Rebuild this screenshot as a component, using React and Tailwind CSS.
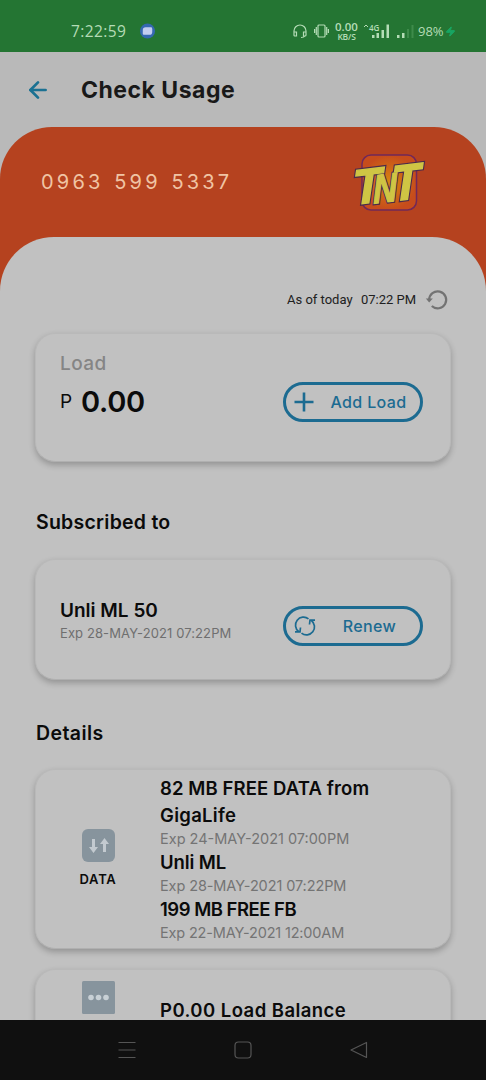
import { ArrowLeft, Zap } from "lucide-react";

const dataItems = [
    { name: "82 MB FREE DATA from", tracking: "tracking-[0.1px]" },
    { name: "GigaLife", exp: "Exp 24-MAY-2021 07:00PM", tracking: "tracking-[0.3px]" },
    { name: "Unli ML", exp: "Exp 28-MAY-2021 07:22PM", tracking: "tracking-[-0.1px]", expTracking: "tracking-[-0.1px]" },
    { name: "199 MB FREE FB", exp: "Exp 22-MAY-2021 12:00AM", tracking: "tracking-[-0.5px]", expTracking: "tracking-[-0.17px]" },
];

export default function App() {
    return (
        <div className="flex flex-col w-[486px] h-[1080px] overflow-hidden bg-[#b9b9b9] font-['Inter',sans-serif] text-[#0b0b0b] whitespace-nowrap">
            <StatusBar />
            <Header />
            <main className="flex-1 min-h-0 overflow-hidden rounded-t-[52px] bg-[#b5421f]">
                <Account />
                <div className="rounded-t-[54px] bg-[#c1c1c1] px-[35px] pt-12 h-[900px]">
                    <LastUpdated />
                    <LoadCard />
                    <h2 className="mt-[45px] h-[30px] leading-[30px] pl-px text-[19.500px] font-semibold tracking-[0.25px]">Subscribed to</h2>
                    <SubscriptionCard />
                    <h2 className="mt-[38px] h-[30px] leading-[30px] pl-px text-[19.500px] font-semibold tracking-[0.4px]">Details</h2>
                    <DetailsCards />
                </div>
            </main>
            <NavBar />
        </div>
    )
}

function StatusBar() {
    return (
        <div className="h-[52px] shrink-0 flex items-center pt-[10px] pl-[71px] bg-[#247533] text-[#b4dcb6] font-['Open_Sans',sans-serif]">
            <p className="w-[68px] text-[15.500px] leading-5 tracking-[0.4px]">7:22:59</p>
            <svg className="w-[17px] h-[18px]" viewBox="0 0 18 18">
                <circle cx="9" cy="9" r="8" fill="#3568b0" />
                <path d="M4 8q0-3 3-3h6q1 0 1 2v3q0 3-3 3H5q-1 0-1-1z" fill="#c2cdf0" />
            </svg>
            <svg className="ml-[137px] w-[14px] h-4" viewBox="0 0 14 16" fill="none" stroke="#b4dcb6" strokeWidth="1.200">
                <path d="M1 10V8a6 6 0 0 1 12 0v2M1 9h2.500v4H2q-1 0-1-1zM13 9h-2.500v4H12q1 0 1-1zM12 13q-1 1.500-4 1.500" />
            </svg>
            <svg className="ml-[7px] w-[15px] h-4" viewBox="0 0 15 16" fill="none" stroke="#b4dcb6" strokeWidth="1.200">
                <rect x="4" y="2" width="7" height="12" rx="1" />
                <path d="M2.300 4v8M.6 6v4M12.700 4v8M14.400 6v4" />
            </svg>
            <div className="ml-[5px] w-[25px] flex flex-col items-center font-semibold">
                <p className="text-[11.500px] leading-[10px]">0.00</p>
                <p className="text-[8.500px] leading-[9px] tracking-[-0.2px]">KB/S</p>
            </div>
            <svg className="ml-[4px] w-[27px] h-4" viewBox="0 0 27 16" fill="#b4dcb6">
                <path d="m1 4 2-2 2 2" fill="none" stroke="#b4dcb6" />
                <text x="6" y="8" fontSize="8" fontWeight="600">4G</text>
                <path d="M9 12h2.500v3H9zM13.500 10H16v5h-2.500zM18.500 7H21v8h-2.500zM23.500 1.500H26V15h-2.500z" />
            </svg>
            <svg className="ml-[6px] w-[18px] h-4" viewBox="0 0 18 16" fill="#b4dcb6">
                <path d="M1 12h2.500v3H1zM6 10h2.500v5H6z" />
                <path d="M11 6h2v9h-2zM15.500 2h2v13h-2z" fill="#3e8b4b" />
            </svg>
            <p className="ml-[4px] w-[27px] text-[13px] leading-5">98%</p>
            <Zap className="w-[11px] h-[13px] fill-[#18a563] text-[#18a563]" />
        </div>
    )
}

function Header() {
    return (
        <header className="h-[75px] shrink-0 flex items-center pl-[25px]">
            <ArrowLeft className="w-[26px] h-[26px] text-[#1b7192]" strokeWidth={2.500} />
            <h1 className="ml-[30px] text-[23px] leading-8 font-bold text-[#191919] tracking-[0.500px]">Check Usage</h1>
        </header>
    )
}

function Account() {
    return (
        <div className="h-[110px] flex items-center pl-[41px]">
            <p className="w-[313px] text-[20px] leading-6 tracking-[3.200px] [word-spacing:1.8px] text-[#f0c4a4]">0963 599 5337</p>
            <TntLogo />
        </div>
    )
}

function LogoLetters() {
    return (
        <>
            <text x="-3" y="0" fontSize="49" textLength="29" lengthAdjust="spacingAndGlyphs">T</text>
            <text x="17" y="1" fontSize="40" textLength="24" lengthAdjust="spacingAndGlyphs">N</text>
            <text x="36" y="1" fontSize="50" textLength="29" lengthAdjust="spacingAndGlyphs">T</text>
        </>
    )
}

function TntLogo() {
    return (
        <svg className="w-[74px] h-[60px] overflow-visible" viewBox="0 0 74 60">
            <defs>
                <radialGradient id="glow">
                    <stop offset="0" stopColor="#d9860f" />
                    <stop offset="1" stopColor="#c64c1c" />
                </radialGradient>
            </defs>
            <rect x="8" y="3" width="54.500" height="55" rx="9" fill="url(#glow)" stroke="#70285a" strokeWidth="1.500" />
            <g
                transform="translate(2.500 52.500) rotate(-7) skewX(-5)"
                fontFamily="Liberation Sans"
                fontWeight="700"
                fontStyle="italic"
                fill="#cfc544"
                strokeLinejoin="miter"
            >
                <g stroke="#4b2a4c" strokeWidth="3.800">
                    <LogoLetters />
                </g>
                <g stroke="#cfc544" strokeWidth="1.400">
                    <LogoLetters />
                </g>
            </g>
        </svg>
    )
}

function LastUpdated() {
    return (
        <div className="h-[30px] flex items-center justify-end pr-[2px] text-[13px] text-[#202020] font-['Roboto',sans-serif]">
            <p className="w-[74px]">As of today</p>
            <p className="w-[64px]">07:22 PM</p>
            <svg className="w-6 h-6" viewBox="0 0 24 24" fill="none" stroke="#737373" strokeWidth="2.200">
                <path d="M4.200 12a8.500 8.500 0 1 1 2.600 6" />
                <path d="M.8 10.500h7l-3.600 4z" fill="#737373" stroke="none" />
            </svg>
        </div>
    )
}

function Card({ className, children }) {
    return (
        <section className={`w-[416px] rounded-[20px] bg-[#c1c1c1] border border-[#b9b9b9] border-b-[#b0b0b0] shadow-[0_3px_6px_rgba(0,0,0,0.24)] ${className}`}>
            {children}
        </section>
    )
}

function PillButton({ icon, children }) {
    return (
        <button className="w-[140px] h-10 flex items-center rounded-full border-3 border-[#1c6b91] pl-[8px] text-[#1c6b91] text-[16px] font-medium tracking-[0.350px]">
            {icon}
            <span className="flex-1 text-center pl-[8px] pr-[5px]">{children}</span>
        </button>
    )
}

function LoadCard() {
    return (
        <Card className="mt-[18px] h-[129px] flex justify-between pl-6 pr-[27px]">
            <div className="pt-[16px]">
                <p className="h-7 leading-7 text-[19px] font-medium tracking-[0.400px] text-[#858585]">Load</p>
                <div className="flex items-center h-12">
                    <p className="w-[21px] text-[19px]">P</p>
                    <p className="text-[29px] font-semibold tracking-[-0.300px]">0.00</p>
                </div>
            </div>
            <div className="pt-12">
                <PillButton
                    icon={
                        <svg className="w-[20px] h-[20px]" viewBox="0 0 20 20" stroke="currentColor" strokeWidth="2.600">
                            <path d="M10 .5v19M.5 10h19" />
                        </svg>
                    }
                >
                    Add Load
                </PillButton>
            </div>
        </Card>
    )
}

function SubscriptionCard() {
    return (
        <Card className="mt-[22px] h-[121px] flex justify-between pl-6 pr-[27px]">
            <div className="pt-[39px]">
                <p className="h-[24px] leading-[24px] text-[19px] font-semibold">Unli ML 50</p>
                <p className="h-[20px] leading-[20px] text-[13px] tracking-[0.100px] text-[#6f6f6f]">Exp 28-MAY-2021 07:22PM</p>
            </div>
            <div className="pt-[46px]">
                <PillButton
                    icon={
                        <svg className="w-[22px] h-[22px]" viewBox="0 0 22 22" fill="none" stroke="currentColor" strokeWidth="1.700">
                            <path d="M4.600 16.500A7.900 7.900 0 0 1 14.500 3.800M17.400 5.500A7.900 7.900 0 0 1 7.500 18.200" />
                            <path d="M15.500 9.500 16 5.200h5M6.500 12.500 6 16.800H1" />
                        </svg>
                    }
                >
                    Renew
                </PillButton>
            </div>
        </Card>
    )
}

function DetailsCards() {
    return (
        <>
            <Card className="mt-[21px] h-[180px] flex">
                <div className="w-[124px] pt-[59px] flex flex-col items-center">
                    <svg className="w-[33px] h-[33px]" viewBox="0 0 33 33">
                        <rect width="33" height="33" rx="6" fill="#87949d" />
                        <path d="M11.500 10v10M22.500 23V13" stroke="#c3cad0" strokeWidth="3" />
                        <path d="M7 18h9l-4.500 6zM18 15h9l-4.500-6z" fill="#c3cad0" />
                    </svg>
                    <p className="mt-[7px] text-[13px] leading-5 font-semibold tracking-[0.700px]">DATA</p>
                </div>
                <div className="pt-[5px]">
                    {dataItems.map((item) => (
                        <div key={item.name}>
                            <p className={`h-[27px] leading-[27px] text-[18.500px] font-semibold ${item.tracking}`}>{item.name}</p>
                            {item.exp && (
                                <p className={`h-[20px] leading-[20px] text-[14.500px] text-[#747474] ${item.expTracking || ""}`}>{item.exp}</p>
                            )}
                        </div>
                    ))}
                </div>
            </Card>
            <Card className="mt-5 h-[180px] flex">
                <div className="w-[124px] pt-[11px] flex flex-col items-center">
                    <svg className="w-[33px] h-[33px]" viewBox="0 0 33 33">
                        <rect width="33" height="33" rx="1.500" fill="#87949d" />
                        <g fill="#c8d0d5">
                            <circle cx="9" cy="16.500" r="2.800" />
                            <circle cx="16.500" cy="16.500" r="2.800" />
                            <circle cx="24" cy="16.500" r="2.800" />
                        </g>
                    </svg>
                </div>
                <p className="pt-[27px] h-[54px] leading-[27px] text-[18.500px] font-semibold tracking-[0.450px]">P0.00 Load Balance</p>
            </Card>
        </>
    )
}

function NavBar() {
    return (
        <nav className="h-[60px] shrink-0 flex items-center justify-between pl-[117px] pr-[117px] bg-[#101010]">
            <svg className="w-[20px] h-5" viewBox="0 0 20 20" stroke="#555" strokeWidth="1.200">
                <path d="M1.500 2.500h17M1.500 10h17M1.500 17.500h17" />
            </svg>
            <svg className="w-5 h-5" viewBox="0 0 20 20" fill="none" stroke="#555" strokeWidth="1.200">
                <rect x="2" y="2" width="16" height="16" rx="3.500" />
            </svg>
            <svg className="w-5 h-5" viewBox="0 0 20 20" fill="none" stroke="#555" strokeWidth="1.200" strokeLinejoin="round">
                <path d="M17.500 2.500v15L2 10z" />
            </svg>
        </nav>
    )
}
